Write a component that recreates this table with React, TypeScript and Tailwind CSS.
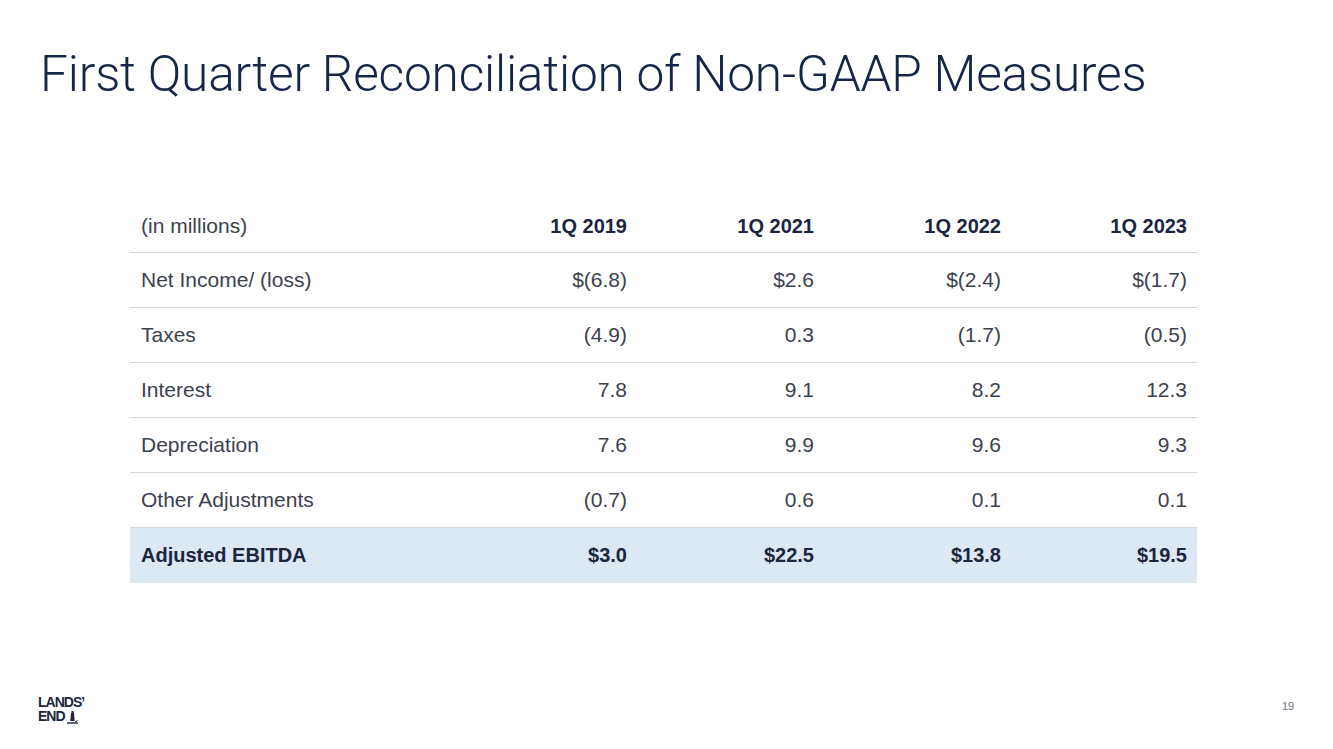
import React from "react";

const rows = [
  { label: "Net Income/ (loss)", values: ["$(6.8)", "$2.6", "$(2.4)", "$(1.7)"] },
  { label: "Taxes", values: ["(4.9)", "0.3", "(1.7)", "(0.5)"] },
  { label: "Interest", values: ["7.8", "9.1", "8.2", "12.3"] },
  { label: "Depreciation", values: ["7.6", "9.9", "9.6", "9.3"] },
  { label: "Other Adjustments", values: ["(0.7)", "0.6", "0.1", "0.1"] },
];

const headers = ["1Q 2019", "1Q 2021", "1Q 2022", "1Q 2023"];
const totals = ["$3.0", "$22.5", "$13.8", "$19.5"];

const grid = "grid grid-cols-[320px_187px_187px_187px_186px] items-center";

function Logo() {
  return (
    <div className="flex flex-col text-[#1b2540] font-['Liberation_Sans',sans-serif] font-bold tracking-[-1px]">
      <span className="block text-[14px] leading-none">LANDS’</span>
      <div className="flex items-end">
        <span className="block text-[14px] leading-none">END</span>
        <svg width="13" height="14" viewBox="0 0 13 14" className="ml-[1px] mb-[-1px]">
          <path d="M5.5 1h2v2h-2z M5 3h3l0.7 8h-4.4z" fill="#1b2540" />
          <path d="M1 13h11" stroke="#1b2540" strokeWidth="1.4" />
          <path d="M9 12l2.5 -1.5" stroke="#1b2540" strokeWidth="1" />
        </svg>
      </div>
    </div>
  );
}

export default function App() {
  return (
    <div className="w-[1333px] h-[749px] bg-white relative overflow-hidden font-['Roboto',sans-serif]">
      <h1 className="pl-[40px] pt-[50px] text-[49.6px] font-light text-[#16264a] leading-none tracking-[-0.2px]">
        First Quarter Reconciliation of Non-GAAP Measures
      </h1>

      <div className="pl-[130px] pt-[100px] font-['Liberation_Sans',sans-serif] text-[21px] text-[#3c4150]">
        <div className="w-[1067px]">
          <div className={`${grid} h-[53px] border-b border-[#d3d7dc]`}>
            <div className="pl-[11px]">(in millions)</div>
            {headers.map((h) => (
              <div key={h} className="text-right font-bold text-[#1b2540] pr-[10px] text-[20px]">
                {h}
              </div>
            ))}
          </div>
          {rows.map((r) => (
            <div key={r.label} className={`${grid} h-[55px] border-b border-[#d3d7dc]`}>
              <div className="pl-[11px]">{r.label}</div>
              {r.values.map((v, i) => (
                <div key={i} className="text-right pr-[10px]">
                  {v}
                </div>
              ))}
            </div>
          ))}
          <div className={`${grid} h-[55px] bg-[#dce8f4] font-bold text-[#1b2540] text-[20px]`}>
            <div className="pl-[11px]">Adjusted EBITDA</div>
            {totals.map((v, i) => (
              <div key={i} className="text-right pr-[10px]">
                {v}
              </div>
            ))}
          </div>
        </div>
      </div>

      <div className="absolute left-[38px] top-[695px]">
        <Logo />
      </div>
      <div className="absolute left-[1282px] top-[698px] text-[11px] text-[#6b7280] font-['Liberation_Sans',sans-serif]">
        19
      </div>
    </div>
  );
}
